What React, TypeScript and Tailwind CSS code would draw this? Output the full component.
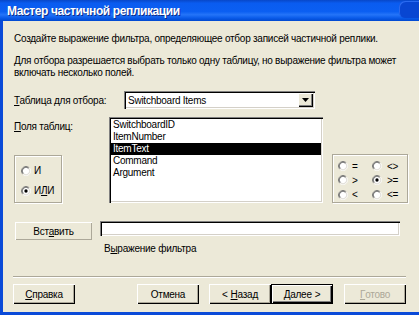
import type { ReactNode } from 'react';

function Radio({ checked }: { checked?: boolean }) {
  return (
    <svg width="10" height="10" viewBox="0 0 12 12" className="shrink-0">
      <circle cx="6" cy="6" r="5" fill="#fff" />
      <path d="M2.1 9.9 A5.5 5.5 0 0 1 9.9 2.1" fill="none" stroke="#808080" />
      <path d="M9.9 2.1 A5.5 5.5 0 0 1 2.1 9.9" fill="none" stroke="#fff" />
      <path d="M2.8 9.2 A4.5 4.5 0 0 1 9.2 2.8" fill="none" stroke="#404040" />
      <path d="M9.2 2.8 A4.5 4.5 0 0 1 2.8 9.2" fill="none" stroke="#d4d0c8" />
      {checked && <circle cx="6" cy="6" r="2" fill="#000" />}
    </svg>
  );
}

function Button({
  children,
  className = '',
  isDefault,
  disabled,
}: {
  children: ReactNode;
  className?: string;
  isDefault?: boolean;
  disabled?: boolean;
}) {
  return (
    <div
      className={`flex items-center justify-center h-[20px] bg-[#ece9d8] ${
        isDefault
          ? 'border border-black shadow-[inset_1px_1px_0_#fff,inset_-1px_-1px_0_#000,inset_-2px_-2px_0_#808080]'
          : 'shadow-[inset_1px_1px_0_#fff,inset_-1px_-1px_0_#000,inset_-2px_-2px_0_#aca899]'
      } ${disabled ? 'text-[#aca899]' : 'text-black'} ${className}`}
    >
      {children}
    </div>
  );
}

const sunken =
  'bg-white shadow-[inset_1px_1px_0_#808080,inset_2px_2px_0_#000,inset_-1px_-1px_0_#fff,inset_-2px_-2px_0_#d4d0c8]';

const groupBox = 'border border-[#aca899] shadow-[1px_1px_0_#fff,inset_1px_1px_0_#fff]';

export default function App() {
  const fields = ['SwitchboardID', 'ItemNumber', 'ItemText', 'Command', 'Argument'];
  const ops = [
    ['=', '<>'],
    ['>', '>='],
    ['<', '<='],
  ];

  return (
    <div className="w-[419px] h-[315px] overflow-hidden flex flex-col bg-[#ece9d8] font-['Liberation_Sans',Arial,sans-serif] text-[10px] tracking-[-0.25px] leading-[13px] text-black whitespace-nowrap">
      {/* Title bar */}
      <div className="relative h-[21px] shrink-0 flex items-center pl-[7px] pt-[2px] bg-[linear-gradient(to_bottom,#0847c8_0%,#0a5cf0_15%,#0b5ff2_55%,#2474f8_70%,#0b5cea_85%,#0048d0_100%)]">
        <span className="text-white font-bold text-[12px] tracking-[-0.4px] [text-shadow:1px_1px_0_#0a2c8a]">
          Мастер частичной репликации
        </span>
        <div className="absolute right-[-8px] top-[1px] w-[28px] h-[17px] rounded-[6px] bg-[#0846d2] shadow-[inset_1px_1px_0_#2a6af0]" />
      </div>

      {/* Body */}
      <div className="flex-1 flex flex-col border-l-[3px] border-b-[3px] border-[#0a4ad8] pl-[11px]">
        <p className="mt-[11px]">Создайте выражение фильтра, определяющее отбор записей частичной реплики.</p>
        <p className="mt-[10px] leading-[12px]">
          Для отбора разрешается выбрать только одну таблицу, но выражение фильтра может
          <br />
          включать несколько полей.
        </p>

        {/* Table combo */}
        <div className="mt-[12px] flex items-center h-[18px]">
          <span className="w-[110px]">
            <u>Т</u>аблица для отбора:
          </span>
          <div className={`${sunken} w-[191px] h-[18px] flex items-center pl-[4px] pr-[2px]`}>
            <span className="flex-1">Switchboard Items</span>
            <div className="w-[15px] h-[14px] flex items-center justify-center bg-[#ece9d8] shadow-[inset_1px_1px_0_#fff,inset_-1px_-1px_0_#000,inset_-2px_-2px_0_#808080]">
              <svg width="7" height="4" viewBox="0 0 7 4">
                <path d="M0 0h7L3.5 4z" fill="#000" />
              </svg>
            </div>
          </div>
        </div>

        {/* Fields, logic and operators */}
        <div className="mt-[8px] grid grid-cols-[86px_214px_76px] gap-x-[9px] h-[86px]">
          <div className="flex flex-col">
            <span className="mt-[3px]">
              <u>П</u>оля таблиц:
            </span>
            <div className={`${groupBox} mt-[22px] w-[48px] h-[48px] flex flex-col pl-[6px] pt-[9px] gap-[9px]`}>
              <label className="flex items-center gap-[3px] h-[11px]">
                <Radio />
                <span>И</span>
              </label>
              <label className="flex items-center gap-[3px] h-[11px]">
                <Radio checked />
                <span>
                  И<u>Л</u>И
                </span>
              </label>
            </div>
          </div>

          <div className={`${sunken} h-[86px] pt-[2px] pl-[2px] pr-[2px]`}>
            {fields.map((f) => (
              <div
                key={f}
                className={`h-[12px] leading-[12px] pl-[2px] ${f === 'ItemText' ? 'bg-black text-white' : ''}`}
              >
                {f}
              </div>
            ))}
          </div>

          <div className={`${groupBox} mt-[37px] h-[49px] pt-[4px] pl-[5px] flex flex-col`}>
            {ops.map(([a, b]) => (
              <div key={a} className="h-[15px] flex items-center">
                <div className="w-[34px] flex items-center gap-[4px]">
                  <Radio />
                  <span>{a}</span>
                </div>
                <div className="flex items-center gap-[5px]">
                  <Radio checked={b === '>='} />
                  <span>{b}</span>
                </div>
              </div>
            ))}
          </div>
        </div>

        {/* Insert row */}
        <div className="mt-[18px] flex items-start">
          <div className="ml-[1px] mt-[1px] w-[77px] h-[18px] flex items-center justify-center shadow-[inset_1px_1px_0_#fff,inset_-1px_-1px_0_#aca899]">
            Вст<u>а</u>вить
          </div>
          <div className={`${sunken} ml-[8px] w-[300px] h-[15px]`} />
        </div>
        <span className="mt-[2px] pl-[90px]">
          В<u>ы</u>ражение фильтра
        </span>

        {/* Separator */}
        <div className="mt-[21px] ml-[-1px] w-[393px] h-[2px] border-t border-[#aca899] border-b border-b-white" />

        {/* Buttons */}
        <div className="mt-[6px] ml-[-1px] flex">
          <Button className="w-[62px]">
            <u>С</u>правка
          </Button>
          <Button className="w-[62px] ml-[62px]">Отмена</Button>
          <Button className="w-[62px] ml-[10px]">
            <span className="mr-[3px]">&lt;</span>
            <u>Н</u>азад
          </Button>
          <Button className="w-[62px]" isDefault>
            <u>Д</u>алее
            <span className="ml-[3px]">&gt;</span>
          </Button>
          <Button className="w-[62px] ml-[11px]" disabled>
            <u>Г</u>отово
          </Button>
        </div>
      </div>
    </div>
  );
}
